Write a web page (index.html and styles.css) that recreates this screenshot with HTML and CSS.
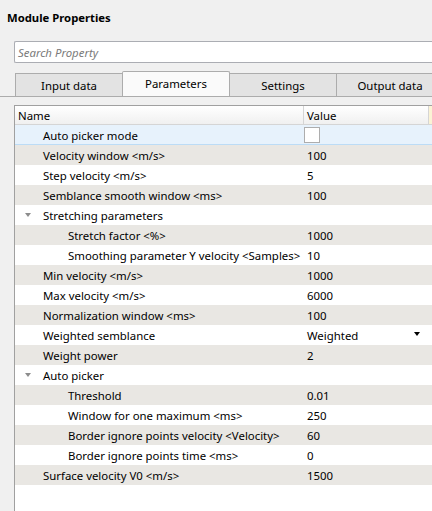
FILE: index.html
```html
<!DOCTYPE html>
<html>
<head>
<meta charset="utf-8">
<link rel="stylesheet" href="styles.css">
</head>
<body>
<div class="panel">
  <div class="title">Module Properties</div>
  <div class="search"><span class="placeholder">Search Property</span></div>
  <div class="tabs">
    <div class="tab">Input data</div>
    <div class="tab active">Parameters</div>
    <div class="tab">Settings</div>
    <div class="tab">Output data</div>
  </div>
  <div class="table">
    <div class="hdr">
      <div class="hname">Name</div>
      <div class="hvalue">Value</div>
      <div class="hextra"></div>
    </div>
    <div class="row sel"><div class="name l1">Auto picker mode</div><div class="value"><span class="check"></span></div></div>
    <div class="row alt"><div class="name l1">Velocity window &lt;m/s&gt;</div><div class="value">100</div></div>
    <div class="row"><div class="name l1">Step velocity &lt;m/s&gt;</div><div class="value">5</div></div>
    <div class="row alt"><div class="name l1">Semblance smooth window &lt;ms&gt;</div><div class="value">100</div></div>
    <div class="row"><div class="name l1 group"><span class="arrow"></span>Stretching parameters</div><div class="value"></div></div>
    <div class="row alt"><div class="name l2">Stretch factor &lt;%&gt;</div><div class="value">1000</div></div>
    <div class="row"><div class="name l2">Smoothing parameter Y velocity &lt;Samples&gt;</div><div class="value">10</div></div>
    <div class="row alt"><div class="name l1">Min velocity &lt;m/s&gt;</div><div class="value">1000</div></div>
    <div class="row"><div class="name l1">Max velocity &lt;m/s&gt;</div><div class="value">6000</div></div>
    <div class="row alt"><div class="name l1">Normalization window &lt;ms&gt;</div><div class="value">100</div></div>
    <div class="row"><div class="name l1">Weighted semblance</div><div class="value combo">Weighted<span class="drop"></span></div></div>
    <div class="row alt"><div class="name l1">Weight power</div><div class="value">2</div></div>
    <div class="row"><div class="name l1 group"><span class="arrow"></span>Auto picker</div><div class="value"></div></div>
    <div class="row alt"><div class="name l2">Threshold</div><div class="value">0.01</div></div>
    <div class="row"><div class="name l2">Window for one maximum &lt;ms&gt;</div><div class="value">250</div></div>
    <div class="row alt"><div class="name l2">Border ignore points velocity &lt;Velocity&gt;</div><div class="value">60</div></div>
    <div class="row"><div class="name l2">Border ignore points time &lt;ms&gt;</div><div class="value">0</div></div>
    <div class="row alt"><div class="name l1">Surface velocity V0 &lt;m/s&gt;</div><div class="value">1500</div></div>
  </div>
</div>
</body>
</html>
```
FILE: styles.css
```css
html, body {
  margin: 0;
  padding: 0;
  height: 100%;
  overflow: hidden;
  background: #f0f0f0;
}
.panel {
  font-family: "Noto Sans", "Open Sans", sans-serif;
  font-size: 11.4px;
  color: #000;
  width: 432px;
  height: 511px;
  display: flex;
  flex-direction: column;
}
.title {
  font-weight: bold;
  font-size: 11.3px;
  line-height: 15px;
  padding: 10px 7px 0;
  height: 15px;
}
.search {
  margin: 16px 0 0 14px;
  height: 20px;
  border: 1px solid #abadb3;
  border-right: none;
  border-radius: 2px 0 0 2px;
  background: #fff;
  display: flex;
  align-items: center;
  padding-left: 3px;
}
.placeholder {
  font-style: italic;
  color: #7a7a7a;
}
.tabs {
  margin-top: 8px;
  height: 25px;
  padding-left: 15px;
  display: flex;
  align-items: flex-end;
  border-bottom: 1px solid #acacac;
  overflow: hidden;
}
.tab {
  width: 106px;
  height: 22px;
  line-height: 23px;
  text-align: center;
  background: #e3e3e3;
  border: 1px solid #acacac;
  border-bottom: none;
  margin-right: -1px;
  flex: none;
}
.tab.active {
  height: 24px;
  line-height: 23px;
  background: #fafafa;
  border-radius: 2px 2px 0 0;
  position: relative;
  z-index: 1;
}
.table {
  margin-top: 8px;
  margin-left: 14px;
  flex: 1;
  background: #fff;
  border-left: 1px solid #a0a0a0;
  border-top: 1px solid #a0a0a0;
}
.hdr {
  display: flex;
  height: 18px;
  line-height: 19px;
  background: linear-gradient(#ffffff, #f0f0f0);
  border-bottom: 1px solid #d5d5d5;
}
.hname {
  width: 285px;
  padding-left: 3px;
  border-right: 1px solid #d5d5d5;
}
.hvalue {
  width: 121px;
  padding-left: 3px;
  border-right: 1px solid #d5d5d5;
}
.hextra {
  flex: 1;
  background: #fbf3d5;
}
.row {
  display: flex;
  height: 20px;
  line-height: 21px;
  background: #fff;
}
.row.alt {
  background: #e9e7e3;
}
.row.sel {
  background: #e7f2fc;
  border-bottom: 1px solid #bcdcf6;
  height: 19px;
}
.name {
  width: 289px;
  flex: none;
  white-space: nowrap;
  overflow: hidden;
  box-sizing: border-box;
  position: relative;
}
.name.l1 { padding-left: 28px; }
.name.l2 { padding-left: 53px; }
.arrow {
  position: absolute;
  left: 10px;
  top: 8px;
  width: 0;
  height: 0;
  border-left: 3.5px solid transparent;
  border-right: 3.5px solid transparent;
  border-top: 4px solid #8c8c8c;
}
.value {
  flex: 1;
  padding-left: 3px;
  white-space: nowrap;
  position: relative;
}
.check {
  display: inline-block;
  width: 14px;
  height: 14px;
  border: 1px solid #adadad;
  background: #fff;
  margin-left: -3px;
  margin-top: 2px;
  vertical-align: top;
}
.combo .drop {
  position: absolute;
  left: 110px;
  top: 7px;
  width: 0;
  height: 0;
  border-left: 3.5px solid transparent;
  border-right: 3.5px solid transparent;
  border-top: 4px solid #000;
}
```
